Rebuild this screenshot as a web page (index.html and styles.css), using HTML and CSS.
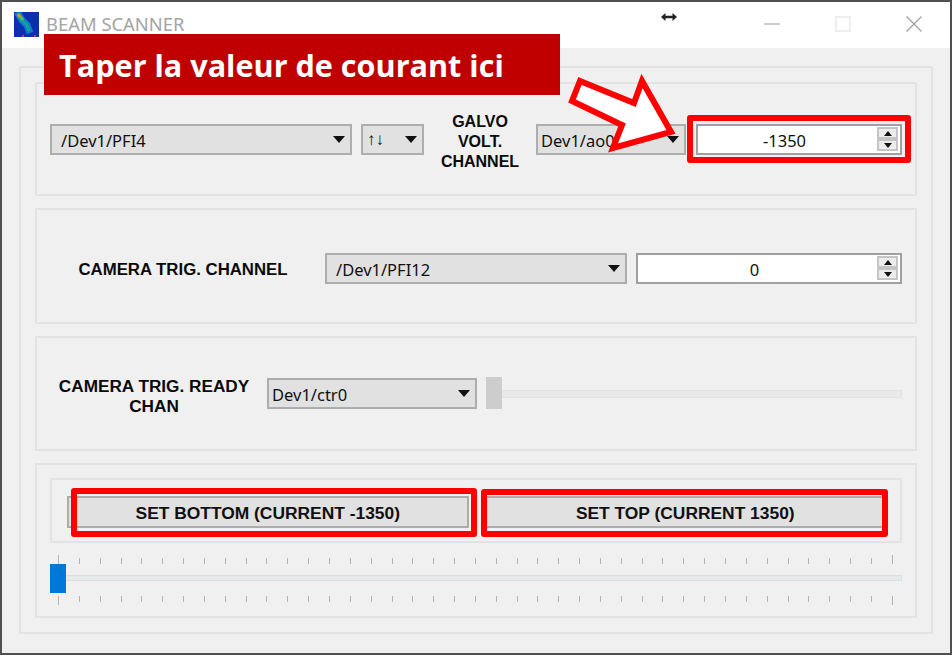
FILE: index.html
```html
<!DOCTYPE html>
<html lang="fr">
<head>
<meta charset="utf-8">
<title>BEAM SCANNER</title>
<link rel="stylesheet" href="styles.css">
</head>
<body>
<div class="window">

  <div class="titlebar">
    <svg class="app-icon" width="25" height="25" viewBox="0 0 25 25">
      <rect width="25" height="25" fill="#0b2fb0"/>
      <path d="M3 0 L8 8 L13 13 L16 21" stroke="#1278c8" stroke-width="7" fill="none"/>
      <path d="M4 3 L9 9 L13 13 L15 19" stroke="#14a0a0" stroke-width="3" fill="none"/>
      <path d="M4 2 L9 8" stroke="#50c050" stroke-width="3" fill="none"/>
      <path d="M4 2 L6 5" stroke="#d89030" stroke-width="3" fill="none"/>
      <rect x="8" y="23" width="2" height="2" fill="#c84040"/>
      <rect x="20" y="23" width="2" height="2" fill="#c84040"/>
    </svg>
    <span class="app-title">BEAM SCANNER</span>
    <div class="win-buttons">
      <svg width="16" height="16" viewBox="0 0 16 16"><path d="M0 8 H16" stroke="#a8a8a8" stroke-width="1.2"/></svg>
      <svg width="16" height="16" viewBox="0 0 16 16"><rect x="1" y="1" width="14" height="14" fill="none" stroke="#e4e4e4" stroke-width="1.2"/></svg>
      <svg width="16" height="16" viewBox="0 0 16 16"><path d="M0.5 0.5 L15.5 15.5 M15.5 0.5 L0.5 15.5" stroke="#a0a0a0" stroke-width="1.2"/></svg>
    </div>
  </div>

  <div class="content">
    <div class="outer-group">

      <div class="group first">
        <div class="combo w302"><span>/Dev1/PFI4</span><i class="arrow"></i></div>
        <div class="combo w63 edge"><span class="edge-glyph">↑↓</span><i class="arrow"></i></div>
        <div class="label w94 galvo">GALVO<br>VOLT.<br>CHANNEL</div>
        <div class="combo w150 tight"><span>Dev1/ao0</span><i class="arrow"></i></div>
        <div class="spin gap10"><span class="spin-value">-1350</span><div class="spin-btns"><b><i class="up"></i></b><b><i class="down"></i></b></div></div>
      </div>

      <div class="group low">
        <div class="label w266 single">CAMERA TRIG. CHANNEL</div>
        <div class="combo w302"><span>/Dev1/PFI12</span><i class="arrow"></i></div>
        <div class="spin"><span class="spin-value">0</span><div class="spin-btns"><b><i class="up"></i></b><b><i class="down"></i></b></div></div>
      </div>

      <div class="group">
        <div class="label w208">CAMERA TRIG. READY<br>CHAN</div>
        <div class="combo w210 tight"><span>Dev1/ctr0</span><i class="arrow"></i></div>
        <div class="mini-slider"><div class="mini-handle"></div></div>
      </div>

      <div class="group last">
        <div class="btn-frame">
          <div class="btn">SET BOTTOM (CURRENT -1350)</div>
          <div class="btn">SET TOP (CURRENT 1350)</div>
        </div>
        <div class="slider">
          <div class="ticks top"><s></s><s></s><s></s><s></s><s></s><s></s><s></s><s></s><s></s><s></s><s></s><s></s><s></s><s></s><s></s><s></s><s></s><s></s><s></s><s></s><s></s><s></s><s></s><s></s><s></s><s></s><s></s><s></s><s></s><s></s><s></s><s></s><s></s><s></s><s></s><s></s><s></s><s></s><s></s><s></s><s></s></div>
          <div class="track-row"><div class="track"></div><div class="handle"></div></div>
          <div class="ticks bottom"><s></s><s></s><s></s><s></s><s></s><s></s><s></s><s></s><s></s><s></s><s></s><s></s><s></s><s></s><s></s><s></s><s></s><s></s><s></s><s></s><s></s><s></s><s></s><s></s><s></s><s></s><s></s><s></s><s></s><s></s><s></s><s></s><s></s><s></s><s></s><s></s><s></s><s></s><s></s><s></s><s></s></div>
        </div>
      </div>

    </div>
  </div>

  <!-- annotations on top of the screenshot -->
  <div class="banner">Taper la valeur de courant ici</div>
  <svg class="call-arrow" width="130" height="90" viewBox="0 0 130 90">
    <path d="M18 15 L72 37 L80 15 L109 66 L51 82 L60 59 L10 35 Z" fill="#fff" stroke="#f00" stroke-width="6"/>
  </svg>
  <div class="red-box box-spin"></div>
  <div class="red-box box-bottom"></div>
  <div class="red-box box-top"></div>
  <svg class="cursor" width="18" height="10" viewBox="0 0 18 10">
    <path d="M1 5 L5.5 1 V3.8 H12.5 V1 L17 5 L12.5 9 V6.2 H5.5 V9 Z" fill="#222"/>
  </svg>
</div>
</body>
</html>
```

FILE: styles.css
```css
html, body {
  margin: 0;
  padding: 0;
}
body {
  font-family: "Noto Sans", "Liberation Sans", sans-serif;
  font-size: 16.5px;
  color: #101010;
}
.window {
  position: relative;
  box-sizing: border-box;
  width: 952px;
  height: 655px;
  border: 2px solid #505050;
  background-color: #f0f0f0;
  overflow: hidden;
}

/* title bar */
.titlebar {
  display: flex;
  align-items: center;
  height: 46px;
  padding-left: 12px;
  padding-right: 28px;
  background-color: #fff;
}
.app-icon {
  margin-top: -2px;
}
.app-title {
  margin-left: 7px;
  margin-top: -4px;
  font-size: 18.4px;
  color: #a4a4a4;
}
.win-buttons {
  display: flex;
  gap: 55px;
  margin-left: auto;
  margin-top: -2px;
}

/* groups */
.content {
  padding: 18px 17px;
}
.outer-group {
  display: flex;
  flex-direction: column;
  gap: 12px;
  padding: 14px;
  height: 536px;
  border: 2px solid #e3e3e3;
}
.group {
  display: flex;
  align-items: center;
  gap: 9px;
  box-sizing: border-box;
  height: 115px;
  padding: 0 13px;
  border: 2px solid #e3e3e3;
}
.group.first {
  height: 114px;
}
.group.low {
  height: 116px;
  padding-top: 4px;
}
.group.last {
  flex-direction: column;
  align-items: stretch;
  gap: 0;
  height: 155px;
  padding-top: 13px;
}

.label {
  padding-top: 5px;
  font-family: "Liberation Sans", sans-serif;
  font-weight: bold;
  font-size: 17.2px;
  line-height: 20px;
  text-align: center;
  color: #0a0a0a;
}
.label.single {
  padding-top: 3px;
  font-size: 16.8px;
}
.galvo {
  font-size: 16px;
}
.w94 { width: 94px; }
.w208 { width: 208px; }
.w266 { width: 266px; }

/* combo boxes */
.combo {
  display: flex;
  align-items: center;
  flex: none;
  box-sizing: border-box;
  height: 31px;
  padding: 2px 5px 0 9px;
  border: 2px solid #adadad;
  background-color: #e1e1e1;
}
.combo.tight {
  padding-left: 3px;
}
.combo.edge {
  padding-left: 4px;
}
.edge-glyph {
  font-family: "Liberation Sans", sans-serif;
  font-size: 17px;
}
.w302 { width: 302px; }
.w63 { width: 63px; }
.w150 { width: 150px; }
.w210 { width: 210px; }
.arrow {
  margin-left: auto;
  margin-top: -2px;
  border-left: 6px solid transparent;
  border-right: 6px solid transparent;
  border-top: 7px solid #111;
}

/* spin boxes */
.spin {
  display: flex;
  align-items: center;
  flex: 1;
  box-sizing: border-box;
  height: 31px;
  border: 2px solid #a0a0a0;
  background-color: #fff;
}
.spin.gap10 {
  margin-left: 1px;
}
.spin-value {
  flex: 1;
  padding-top: 2px;
  padding-right: 6px;
  text-align: center;
}
.spin-btns {
  display: flex;
  flex-direction: column;
  gap: 0;
  width: 21px;
  margin-right: 2px;
}
.spin-btns b {
  display: flex;
  align-items: center;
  justify-content: center;
  box-sizing: border-box;
  height: 12px;
  border: 2px solid #c4c4c4;
  background-color: #ececec;
}
.up {
  border-left: 4px solid transparent;
  border-right: 4px solid transparent;
  border-bottom: 5px solid #111;
}
.down {
  border-left: 4px solid transparent;
  border-right: 4px solid transparent;
  border-top: 5px solid #111;
}

/* small slider of row 3 */
.mini-slider {
  position: relative;
  flex: 1;
  height: 6px;
  background-color: #e9e9e9;
  border: 1px solid #e2e2e2;
}
.mini-handle {
  position: absolute;
  left: -1px;
  top: -14px;
  width: 16px;
  height: 32px;
  background-color: #cdcdcd;
}

/* buttons of row 4 */
.btn-frame {
  display: flex;
  gap: 16px;
  box-sizing: border-box;
  height: 65px;
  padding: 16px 14px 0 15px;
  border: 2px solid #e3e3e3;
}
.btn {
  flex: 1;
  box-sizing: border-box;
  height: 32px;
  line-height: 31px;
  text-align: center;
  font-family: "Liberation Sans", sans-serif;
  font-size: 17.4px;
  font-weight: bold;
  border: 2px solid #adadad;
  background-color: #e1e1e1;
}

/* big slider */
.slider {
  margin-top: 12px;
}
.ticks {
  display: flex;
  justify-content: space-between;
  height: 9px;
  padding: 0 9px 0 8px;
}
.ticks.top {
  align-items: flex-end;
}
.ticks.bottom {
  align-items: flex-start;
}
.ticks s {
  width: 1px;
  height: 6px;
  background-color: #b4b4aa;
}
.ticks s:first-child, .ticks s:last-child {
  height: 9px;
}
.track-row {
  position: relative;
  box-sizing: border-box;
  height: 32px;
  padding-top: 11px;
}
.track {
  box-sizing: border-box;
  height: 6px;
  border: 1px solid #dcdfdf;
  background-color: #e7eaea;
}
.handle {
  position: absolute;
  left: 0;
  top: 0;
  width: 16px;
  height: 29px;
  background-color: #0078d7;
}

/* annotations */
.banner {
  position: absolute;
  left: 42px;
  top: 32px;
  box-sizing: border-box;
  width: 516px;
  height: 61px;
  padding-left: 15px;
  line-height: 63px;
  font-family: "Open Sans", sans-serif;
  font-weight: bold;
  font-size: 30.6px;
  color: #fff;
  background-color: #c00000;
}
.call-arrow {
  position: absolute;
  left: 560px;
  top: 64px;
}
.red-box {
  position: absolute;
  box-sizing: border-box;
  border: 6px solid #f00;
  border-radius: 3px;
}
.box-spin {
  left: 685px;
  top: 113px;
  width: 224px;
  height: 48px;
}
.box-bottom {
  left: 69px;
  top: 486px;
  width: 406px;
  height: 49px;
}
.box-top {
  left: 479px;
  top: 487px;
  width: 407px;
  height: 48px;
}
.cursor {
  position: absolute;
  left: 658px;
  top: 10px;
}
```
